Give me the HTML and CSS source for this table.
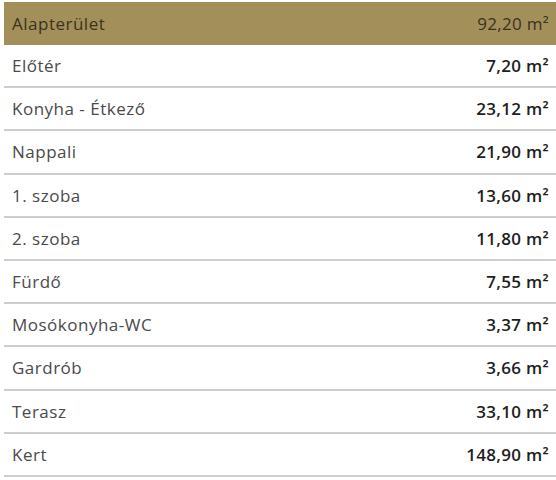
FILE: index.html
```html
<!DOCTYPE html>
<html>
<head>
    <meta charset="utf-8"/>
    <title>Alapterület</title>
    <link rel="stylesheet" href="styles.css">
</head>
<body>

<div class="area-table">
    <div class="row head"><span class="name">Alapterület</span><span class="size">92,20 m²</span></div>
    <div class="row"><span class="name">Előtér</span><span class="size">7,20 m²</span></div>
    <div class="row"><span class="name">Konyha - Étkező</span><span class="size">23,12 m²</span></div>
    <div class="row"><span class="name">Nappali</span><span class="size">21,90 m²</span></div>
    <div class="row"><span class="name">1. szoba</span><span class="size">13,60 m²</span></div>
    <div class="row"><span class="name">2. szoba</span><span class="size">11,80 m²</span></div>
    <div class="row"><span class="name">Fürdő</span><span class="size">7,55 m²</span></div>
    <div class="row"><span class="name">Mosókonyha-WC</span><span class="size">3,37 m²</span></div>
    <div class="row"><span class="name">Gardrób</span><span class="size">3,66 m²</span></div>
    <div class="row"><span class="name">Terasz</span><span class="size">33,10 m²</span></div>
    <div class="row"><span class="name">Kert</span><span class="size">148,90 m²</span></div>
</div>

</body>
</html>
```
FILE: styles.css
```css
body {
    margin: 0;
    background: #fff;
}

.area-table {
    margin: 2px 0 0 4px;
    font-family: "Open Sans", "DejaVu Sans", sans-serif;
    font-size: 17px;
    letter-spacing: 0.5px;
}

.row {
    display: flex;
    justify-content: space-between;
    align-items: center;
    height: 41.2px;
    padding: 0 7px 0 8px;
    border-bottom: 2px solid #cdcdcd;
    color: #4a4a4a;
}

.row .size {
    font-weight: 600;
    color: #1e1e1e;
    letter-spacing: 0.3px;
}

.row.head {
    height: 43px;
    border-bottom: none;
    background: #a38f5a;
    color: #3b321e;
}

.row.head .size {
    font-weight: 400;
    color: #3b321e;
}
```
